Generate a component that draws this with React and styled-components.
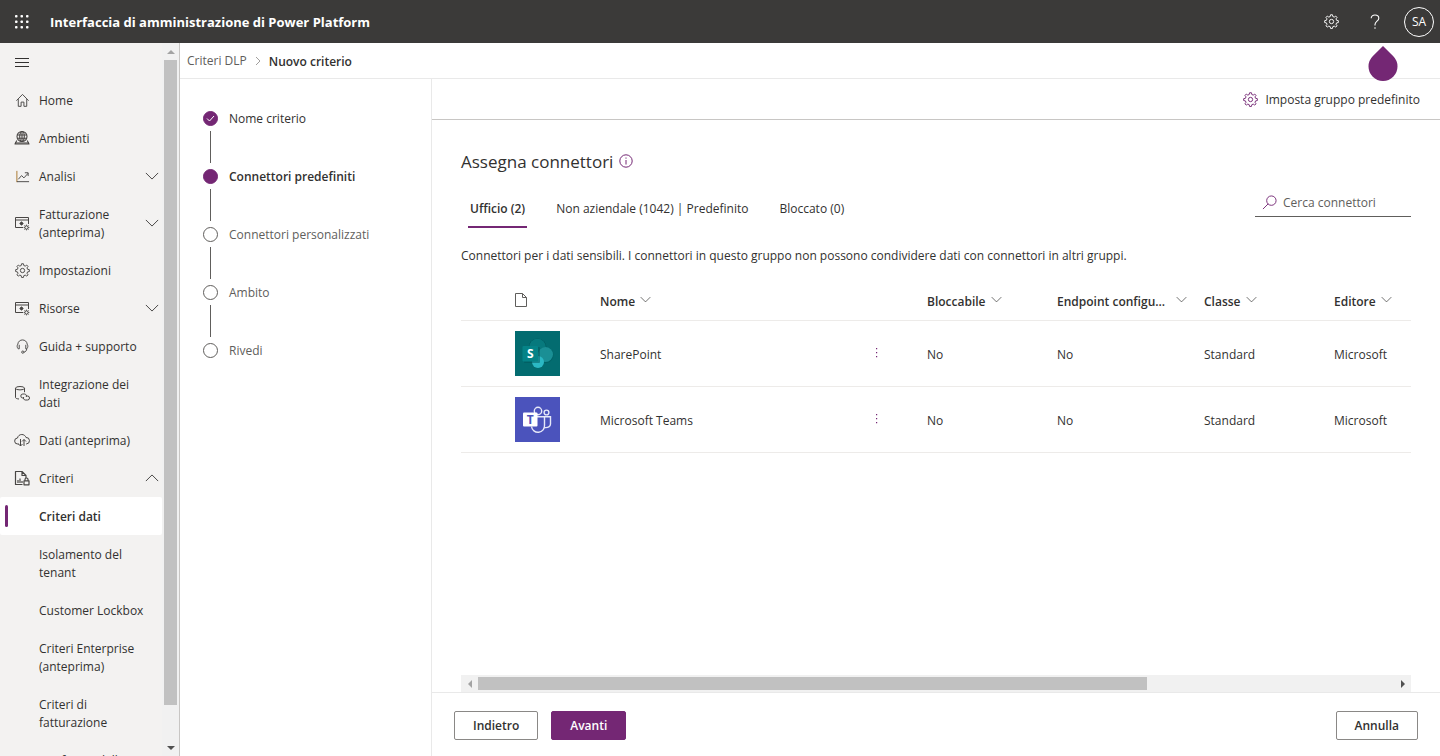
import React, { useState } from "react";
import styled, { createGlobalStyle } from "styled-components";

const GlobalStyle = createGlobalStyle`
  * {
    box-sizing: border-box;
  }
  body {
    margin: 0;
    background: #fff;
    color: #323130;
    font-family: "Open Sans", "Noto Sans", sans-serif;
    font-size: 12px;
    line-height: 18px;
  }
  button,
  input {
    font: inherit;
    color: inherit;
  }
  button {
    padding: 0;
    border: 0;
    background: none;
    cursor: pointer;
  }
  svg {
    display: block;
    flex: none;
  }
`;

const Icon = ({ size = 14, box = 16, width = 1, children }) => (
  <svg
    width={size}
    height={size}
    viewBox={`0 0 ${box} ${box}`}
    fill="none"
    stroke="currentColor"
    strokeWidth={width}
    strokeLinejoin="round"
    aria-hidden="true"
  >
    {children}
  </svg>
);

const HomeIcon = () => (
  <Icon size={15}>
    <path d="M1.5 8.2 8 1.5l6.5 6.7M3.5 6.5v7.7h3V9.700h3v4.500h3V6.500" />
  </Icon>
);

const EnvIcon = () => (
  <Icon size={16} width={1.1}>
    <circle cx="8" cy="6.5" r="5" />
    <ellipse cx="8" cy="6.5" rx="2.3" ry="5" />
    <path d="M3.3 5h9.4M3.3 8.3h9.4M8 1.5v10M2.8 10.5 1 14h14l-1.8-3.5" />
    <path d="M1 13h14" />
  </Icon>
);

const ChartIcon = () => (
  <Icon size={15}>
    <path d="M2 2v12" stroke="#a8752a" />
    <path d="M2 13.5h13M3.5 11 7 7l2.5 2.5L14 4.500M10.5 4H14v3.5" />
  </Icon>
);

const ResourceIcon = () => (
  <Icon size={16}>
    <path d="M9 12.5H1.5v-10h13V9M1.5 5h13M7.5 6.5v4M5.5 8.5h4M6.2 7.2l2.6 2.6M8.8 7.2 6.2 9.8" />
    <circle cx="12.5" cy="12.5" r="1.7" />
    <path d="M12.5 9.7v1M12.5 14.3v1M9.7 12.5h1M14.3 12.5h1M10.5 10.5l.8.8M13.7 13.7l.8.8M14.5 10.5l-.8.8M11.3 13.7l-.8.8" />
  </Icon>
);

const GearIcon = () => (
  <Icon size={15}>
    <path d="M6.6 2.7 7 .8h2l.4 1.9 1.500.6 1.6-1.1 1.4 1.4-1.1 1.600.6 1.5 1.900.4v2l-1.900.4-.6 1.500 1.100 1.600-1.400 1.400-1.600-1.100-1.500.6L9 15.400H7l-.4-1.900-1.500-.6L3.500 14l-1.400-1.400L3.200 11l-.6-1.500L.7 9.100v-2l1.900-.4.6-1.500-1.100-1.600 1.400-1.400 1.600 1.100z" />
    <circle cx="8" cy="8" r="2.3" />
  </Icon>
);

const HeadsetIcon = () => (
  <Icon size={15}>
    <path d="M4.5 10.5V6.2M3.5 10.5c-1.5-1.5-1.5-3.5-.5-5C3.3 2.7 5.5 1 8 1s4.7 1.7 5 4.5c1 1.5 1 3.5-.5 5h-1V6.2M3.5 10.5h1M12.5 10.5c0 2-1.5 3.5-3 3.5" />
    <circle cx="8.3" cy="14" r="1.2" />
  </Icon>
);

const DataLinkIcon = () => (
  <Icon size={16}>
    <ellipse cx="6" cy="3.2" rx="4.5" ry="1.7" />
    <path d="M1.5 3.2v9.3c0 .8 1.5 1.3 3.5 1.5M10.5 3.2v4" />
    <path d="M9.5 13H8.800a2 2 0 0 1 0-4h1.700a2 2 0 0 1 1.700 3M12.500 11h1a2 2 0 0 1 0 4h-2.200a2 2 0 0 1-1.600-3" />
  </Icon>
);

const CloudIcon = () => (
  <Icon size={16}>
    <path d="M5 12H3.800a3 3 0 0 1-.3-6c.5-2.2 2.2-3.5 4.3-3.5 2 0 3.6 1.2 4.2 3a3.2 3.2 0 0 1 .5 6.400H12M6.500 7v7M4.500 12l2 2 2-2M10 14V7.500M8 9.500l2-2 2 2" />
  </Icon>
);

const PolicyIcon = () => (
  <Icon size={16} width={1.2}>
    <path d="M8.5 14.5h-7v-13H8l4 4V8M8 1.5v4h4" />
    <path d="M4 13v-3M6 13V8.5M8 13v-2" />
    <rect x="10" y="10.8" width="5" height="4" />
    <path d="M11 10.8V9.500a1.500 1.500 0 0 1 3 0v1.300" />
  </Icon>
);

const Chevron = ({ size = 14, up }) => (
  <Icon size={size}>
    <path d={up ? "M1 11.5l7-7 7 7" : "M1 4.5l7 7 7-7"} />
  </Icon>
);

const SharePointLogo = () => (
  <svg width="45" height="45" viewBox="0 0 45 45" role="img" aria-label="SharePoint">
    <rect width="45" height="45" fill="#036c70" />
    <circle cx="22.5" cy="16.5" r="9" fill="#02585c" />
    <circle cx="22.5" cy="16" r="8.3" fill="#07797d" />
    <circle cx="30.5" cy="24" r="8" fill="#02585c" opacity=".5" />
    <circle cx="30.5" cy="23.5" r="7.5" fill="#1a8f95" />
    <circle cx="23" cy="31" r="6" fill="#2bb8c4" />
    <rect x="9" y="16" width="16" height="16" rx="1" fill="#025357" opacity=".5" />
    <rect x="7.5" y="15" width="15.5" height="15.5" rx="1" fill="#058387" />
    <text x="15.2" y="27" textAnchor="middle" fontSize="12" fontWeight="700" fill="#fff">
      S
    </text>
  </svg>
);

const TeamsLogo = () => (
  <svg width="45" height="45" viewBox="0 0 45 45" role="img" aria-label="Microsoft Teams">
    <rect width="45" height="45" fill="#4b53bc" />
    <g fill="none" stroke="#e6e8f8" strokeWidth="1.4">
      <circle cx="23" cy="14" r="3.7" />
      <circle cx="31.5" cy="15.5" r="2.4" />
      <path d="M22 19.7h7.5V28a6.500 6.500 0 0 1-13 1.500M29.500 19.700h6V27c0 2.500-2.500 4-6 3.500" />
    </g>
    <rect x="8" y="15.5" width="14.5" height="14" rx="1" fill="#fff" />
    <text x="15.2" y="27" textAnchor="middle" fontSize="12" fontWeight="700" fill="#4b53bc">
      T
    </text>
  </svg>
);

const navItems = [
  { label: "Home", icon: HomeIcon },
  { label: "Ambienti", icon: EnvIcon },
  { label: "Analisi", icon: ChartIcon, expand: "down" },
  { label: "Fatturazione (anteprima)", icon: ResourceIcon, expand: "down" },
  { label: "Impostazioni", icon: GearIcon },
  { label: "Risorse", icon: ResourceIcon, expand: "down" },
  { label: "Guida + supporto", icon: HeadsetIcon },
  { label: "Integrazione dei dati", icon: DataLinkIcon },
  { label: "Dati (anteprima)", icon: CloudIcon },
  { label: "Criteri", icon: PolicyIcon, expand: "up" },
  { label: "Criteri dati", active: true },
  { label: "Isolamento del tenant" },
  { label: "Customer Lockbox" },
  { label: "Criteri Enterprise (anteprima)" },
  { label: "Criteri di fatturazione" },
  { label: "Conferma della" },
];

const steps = [
  { label: "Nome criterio", state: "done" },
  { label: "Connettori predefiniti", state: "current" },
  { label: "Connettori personalizzati", state: "todo" },
  { label: "Ambito", state: "todo" },
  { label: "Rivedi", state: "todo" },
];

const tabs = ["Ufficio (2)", "Non aziendale (1042) | Predefinito", "Bloccato (0)"];

const connectors = [
  { name: "SharePoint", logo: SharePointLogo },
  { name: "Microsoft Teams", logo: TeamsLogo },
];

function ScrollBar({ horizontal, size }) {
  return (
    <Track $horizontal={horizontal} aria-hidden="true">
      <Arrow>
        <svg width="8" height="8" viewBox="0 0 8 8" fill="#a3a3a3">
          <path d={horizontal ? "M6 0v8L2 4z" : "M0 6h8L4 2z"} />
        </svg>
      </Arrow>
      <Rail $horizontal={horizontal}>
        <Thumb $size={size} />
      </Rail>
      <Arrow>
        <svg width="8" height="8" viewBox="0 0 8 8" fill="#505050">
          <path d={horizontal ? "M2 0v8l4-4z" : "M0 2h8L4 6z"} />
        </svg>
      </Arrow>
    </Track>
  );
}

function SortHeader({ label, clip }) {
  return (
    <th>
      <Sort $clip={clip}>
        <span>{label}</span>
        <Chevron size={11} />
      </Sort>
    </th>
  );
}

export default function App() {
  const [tab, setTab] = useState(0);
  const [search, setSearch] = useState("");

  return (
    <Page>
      <GlobalStyle />
      <Header>
        <IconButton aria-label="Avvio app">
          <svg width="14" height="14" viewBox="0 0 14 14" fill="#fff">
            {[0, 5.5, 11].map((y) =>
              [0, 5.5, 11].map((x) => (
                <rect key={`${x}-${y}`} x={x} y={y} width="2.5" height="2.5" rx="0.8" />
              ))
            )}
          </svg>
        </IconButton>
        <h1>Interfaccia di amministrazione di Power Platform</h1>
        <IconButton aria-label="Impostazioni">
          <GearIcon />
        </IconButton>
        <HelpButton aria-label="Guida">
          <svg width="10" height="16" viewBox="0 0 10 16" fill="none" stroke="#fff" strokeWidth="1.1">
            <path d="M1.2 4.200C1.200 2.200 2.800 1 5 1s3.800 1.300 3.800 3.200C8.800 7 5 7.300 5 10.500v1M5 13.300v1.500" />
          </svg>
          <Drop>
            <svg width="30" height="36" viewBox="0 0 30 36" fill="#742774">
              <path d="M15 0l10.300 10.200a14.500 14.500 0 1 1-20.600 0z" />
            </svg>
          </Drop>
        </HelpButton>
        <Avatar>SA</Avatar>
      </Header>

      <Body>
        <Sidebar>
          <Nav>
            <MenuButton aria-label="Comprimi">
              <Icon size={14} box={14}>
                <path d="M0 2.5h14M0 6.5h14M0 10.5h14" />
              </Icon>
            </MenuButton>
            {navItems.map(({ label, icon: ItemIcon, expand, active }) => (
              <NavLink href="#" key={label} $active={active}>
                <NavIcon>{ItemIcon && <ItemIcon />}</NavIcon>
                <NavLabel>{label}</NavLabel>
                {expand && <Chevron up={expand === "up"} />}
              </NavLink>
            ))}
          </Nav>
          <ScrollBar size="95%" />
        </Sidebar>

        <Main>
          <Breadcrumb>
            <a href="#">Criteri DLP</a>
            <svg width="6" height="10" viewBox="0 0 6 10" fill="none" stroke="#a19f9d">
              <path d="M1 1l4 4-4 4" />
            </svg>
            <strong>Nuovo criterio</strong>
          </Breadcrumb>
          <Columns>
            <Steps>
              {steps.map((step) => (
                <Step key={step.label} $state={step.state}>
                  <Dot $state={step.state}>
                    {step.state === "done" && (
                      <svg width="9" height="7" viewBox="0 0 9 7" fill="none" stroke="#fff">
                        <path d="M1 3.5L3.500 6 8 1" />
                      </svg>
                    )}
                  </Dot>
                  <StepLabel>{step.label}</StepLabel>
                </Step>
              ))}
            </Steps>

            <Work>
              <Toolbar>
                <ToolButton>
                  <GearIcon />
                  <span>Imposta gruppo predefinito</span>
                </ToolButton>
              </Toolbar>
              <Content>
                <Title>
                  <h2>Assegna connettori</h2>
                  <Icon size={14} box={14}>
                    <circle cx="7" cy="7" r="6.2" />
                    <path d="M7 6v4.5M7 3.5v1.2" />
                  </Icon>
                </Title>
                <TabRow>
                  <Tabs role="tablist">
                    {tabs.map((label, index) => (
                      <Tab
                        key={label}
                        role="tab"
                        aria-selected={tab === index}
                        $active={tab === index}
                        onClick={() => setTab(index)}
                      >
                        {label}
                      </Tab>
                    ))}
                  </Tabs>
                  <Search>
                    <Icon size={15}>
                      <circle cx="10" cy="6" r="5" />
                      <path d="M6.5 9.5L1 15" />
                    </Icon>
                    <input
                      type="text"
                      aria-label="Cerca connettori"
                      placeholder="Cerca connettori"
                      value={search}
                      onChange={(e) => setSearch(e.target.value)}
                    />
                  </Search>
                </TabRow>
                <Description>
                  Connettori per i dati sensibili. I connettori in questo gruppo non possono condividere
                  dati con connettori in altri gruppi.
                </Description>
                <Table>
                  <colgroup>
                    <Col $width={54} />
                    <Col $width={85} />
                    <col />
                    <Col $width={75} />
                    <Col $width={130} />
                    <Col $width={147} />
                    <Col $width={130} />
                    <Col $width={77} />
                  </colgroup>
                  <thead>
                    <tr>
                      <th />
                      <th>
                        <svg width="12" height="14" viewBox="0 0 12 14" fill="none" stroke="#605e5c">
                          <path d="M.5.5h7l4 4v9H.5zM7.5.5v4h4" />
                        </svg>
                      </th>
                      <SortHeader label="Nome" />
                      <th />
                      <SortHeader label="Bloccabile" />
                      <SortHeader label="Endpoint configurabile" clip />
                      <SortHeader label="Classe" />
                      <SortHeader label="Editore" />
                    </tr>
                  </thead>
                  <tbody>
                    {connectors.map(({ name, logo: Logo }) => (
                      <tr key={name}>
                        <td />
                        <td>
                          <Logo />
                        </td>
                        <td className="text">{name}</td>
                        <td>
                          <MoreButton aria-label={`Altre azioni per ${name}`}>
                            <svg width="2" height="10" viewBox="0 0 2 10" fill="#742774">
                              <path d="M0 0h1.2v1.2H0zM0 4h1.2v1.2H0zM0 8h1.2v1.2H0z" />
                            </svg>
                          </MoreButton>
                        </td>
                        <td className="text">No</td>
                        <td className="text">No</td>
                        <td className="text">Standard</td>
                        <td className="text">Microsoft</td>
                      </tr>
                    ))}
                  </tbody>
                </Table>
                <Spacer />
                <ScrollBar horizontal size="73%" />
              </Content>
              <Footer>
                <Button>Indietro</Button>
                <Button $primary>Avanti</Button>
                <Spacer />
                <Button>Annulla</Button>
              </Footer>
            </Work>
          </Columns>
        </Main>
      </Body>
    </Page>
  );
}

const Page = styled.div`
  display: flex;
  flex-direction: column;
  height: 100vh;
  overflow: hidden;
`;

const Header = styled.header`
  display: flex;
  align-items: center;
  flex: none;
  height: 43px;
  padding-right: 6px;
  background: #3b3a39;
  color: #fff;
  h1 {
    flex: 1;
    margin: 0;
    padding-left: 7px;
    font-size: 13px;
    font-weight: 700;
  }
`;

const IconButton = styled.button`
  display: flex;
  align-items: center;
  justify-content: center;
  width: 43px;
  height: 43px;
`;

const HelpButton = styled(IconButton)`
  position: relative;
`;

const Drop = styled.span`
  position: absolute;
  top: 46px;
  left: 15px;
  z-index: 1;
`;

const Avatar = styled.button`
  width: 30px;
  height: 30px;
  margin-left: 8px;
  padding-top: 1px;
  border: 1px solid #fff;
  border-radius: 50%;
`;

const Body = styled.div`
  display: flex;
  flex: 1;
  min-height: 0;
`;

const Sidebar = styled.aside`
  display: flex;
  flex: none;
  width: 180px;
  border-right: 1px solid #c8c6c4;
  background: #f3f2f1;
`;

const Nav = styled.nav`
  flex: 1;
  overflow: hidden;
`;

const MenuButton = styled.button`
  display: flex;
  align-items: center;
  width: 43px;
  height: 38px;
  padding: 2px 0 0 15px;
`;

const NavLink = styled.a`
  display: flex;
  align-items: center;
  padding: 10px 3px 10px 5px;
  border-radius: 2px;
  background: ${(p) => (p.$active ? "#fff" : "none")};
  color: #323130;
  font-weight: ${(p) => (p.$active ? 600 : 400)};
  text-decoration: none;
  &::before {
    content: "";
    width: 3px;
    height: 22px;
    margin: -2px 0;
    border-radius: 2px;
    background: ${(p) => (p.$active ? "#742774" : "none")};
  }
`;

const NavIcon = styled.span`
  display: flex;
  justify-content: center;
  width: 31px;
  padding-right: 3px;
  color: #484644;
`;

const NavLabel = styled.span`
  flex: 1;
  margin-bottom: -1px;
  padding: 1px 8px 0 0;
`;

const Track = styled.div`
  display: flex;
  flex: none;
  flex-direction: ${(p) => (p.$horizontal ? "row" : "column")};
  ${(p) => (p.$horizontal ? "height" : "width")}: 17px;
  background: #f1f1f1;
`;

const Arrow = styled.div`
  display: flex;
  align-items: center;
  justify-content: center;
  width: 17px;
  height: 17px;
`;

const Rail = styled.div`
  display: flex;
  flex: 1;
  flex-direction: ${(p) => (p.$horizontal ? "row" : "column")};
  padding: ${(p) => (p.$horizontal ? "2px 0" : "0 2px")};
`;

const Thumb = styled.div`
  flex: 0 0 ${(p) => p.$size};
  background: #c1c1c1;
`;

const Main = styled.main`
  display: flex;
  flex: 1;
  flex-direction: column;
  min-width: 0;
`;

const Breadcrumb = styled.nav`
  display: flex;
  align-items: center;
  gap: 8px;
  height: 36px;
  padding-left: 7px;
  border-bottom: 1px solid #e9e9e9;
  a {
    color: #605e5c;
    text-decoration: none;
  }
  strong {
    padding-top: 2px;
    font-weight: 600;
  }
`;

const Columns = styled.div`
  display: flex;
  flex: 1;
  min-height: 0;
`;

const Steps = styled.ol`
  flex: none;
  width: 252px;
  margin: 0;
  padding: 29px 0 0 23px;
  border-right: 1px solid #e9e9e9;
  list-style: none;
`;

const Step = styled.li`
  display: grid;
  grid-template-columns: 15px 1fr;
  grid-template-rows: 20px 38px;
  align-items: center;
  column-gap: 11px;
  color: ${(p) => (p.$state === "todo" ? "#605e5c" : "#323130")};
  font-weight: ${(p) => (p.$state === "current" ? 600 : 400)};
  &:not(:last-child)::after {
    content: "";
    justify-self: center;
    width: 1px;
    height: 32px;
    background: #605e5c;
  }
`;

const StepLabel = styled.span`
  padding-top: 2px;
`;

const Dot = styled.span`
  display: flex;
  align-items: center;
  justify-content: center;
  width: 15px;
  height: 15px;
  border: 1px solid ${(p) => (p.$state === "todo" ? "#605e5c" : "#742774")};
  border-radius: 50%;
  background: ${(p) => (p.$state === "todo" ? "#fff" : "#742774")};
`;

const Work = styled.section`
  display: flex;
  flex: 1;
  flex-direction: column;
  min-width: 0;
`;

const Toolbar = styled.div`
  display: flex;
  justify-content: flex-end;
  height: 41px;
  padding-right: 20px;
  border-bottom: 1px solid #c8c6c4;
`;

const ToolButton = styled.button`
  display: flex;
  align-items: center;
  gap: 7px;
  svg {
    color: #742774;
  }
  span {
    padding-top: 2px;
  }
`;

const Content = styled.div`
  display: flex;
  flex: 1;
  flex-direction: column;
  padding: 28px 29px 0;
`;

const Title = styled.div`
  display: flex;
  align-items: center;
  gap: 6px;
  height: 26px;
  color: #742774;
  h2 {
    margin: 0;
    padding-top: 2px;
    color: #323130;
    font-size: 17px;
    font-weight: 400;
  }
`;

const TabRow = styled.div`
  display: flex;
  justify-content: space-between;
  margin-top: 14px;
`;

const Tabs = styled.div`
  display: flex;
  gap: 27px;
  padding-left: 7px;
`;

const Tab = styled.button`
  height: 40px;
  padding: 4px 2px 0;
  border-bottom: 2px solid ${(p) => (p.$active ? "#742774" : "transparent")};
  font-weight: ${(p) => (p.$active ? 600 : 400)};
`;

const Search = styled.label`
  display: flex;
  align-items: center;
  gap: 6px;
  width: 156px;
  height: 29px;
  padding-left: 7px;
  border-bottom: 1px solid #605e5c;
  color: #742774;
  input {
    flex: 1;
    min-width: 0;
    padding: 2px 0 0;
    border: 0;
    outline: none;
    background: none;
    color: #323130;
  }
  input::placeholder {
    color: #605e5c;
    opacity: 1;
  }
`;

const Description = styled.p`
  margin: 19px 0 15px;
`;

const Table = styled.table`
  width: 100%;
  border-collapse: collapse;
  table-layout: fixed;
  th,
  td {
    padding: 0;
    border-bottom: 1px solid #edebe9;
    text-align: left;
  }
  th {
    height: 40px;
    font-weight: 600;
  }
  td {
    height: 66px;
  }
  .text {
    padding-top: 3px;
  }
`;

const Col = styled.col`
  width: ${(p) => p.$width}px;
`;

const Sort = styled.button`
  display: flex;
  align-items: center;
  gap: 5px;
  width: ${(p) => (p.$clip ? "130px" : "auto")};
  font-weight: 600;
  span {
    flex: ${(p) => (p.$clip ? "1" : "none")};
    overflow: hidden;
    padding: ${(p) => (p.$clip ? "4px 4px 0 0" : "4px 0 0")};
    text-align: left;
    text-overflow: ellipsis;
    white-space: nowrap;
  }
`;

const MoreButton = styled.button`
  display: flex;
  align-items: center;
  justify-content: center;
  width: 50px;
  height: 30px;
`;

const Spacer = styled.div`
  flex: 1;
`;

const Footer = styled.footer`
  display: flex;
  gap: 13px;
  padding: 18px 22px 16px;
  border-top: 1px solid #e9e9e9;
`;

const Button = styled.button`
  height: 29px;
  padding: 0 18px;
  border: 1px solid ${(p) => (p.$primary ? "#742774" : "#8a8886")};
  border-radius: 2px;
  background: ${(p) => (p.$primary ? "#742774" : "#fff")};
  color: ${(p) => (p.$primary ? "#fff" : "#323130")};
  font-weight: 600;
`;
